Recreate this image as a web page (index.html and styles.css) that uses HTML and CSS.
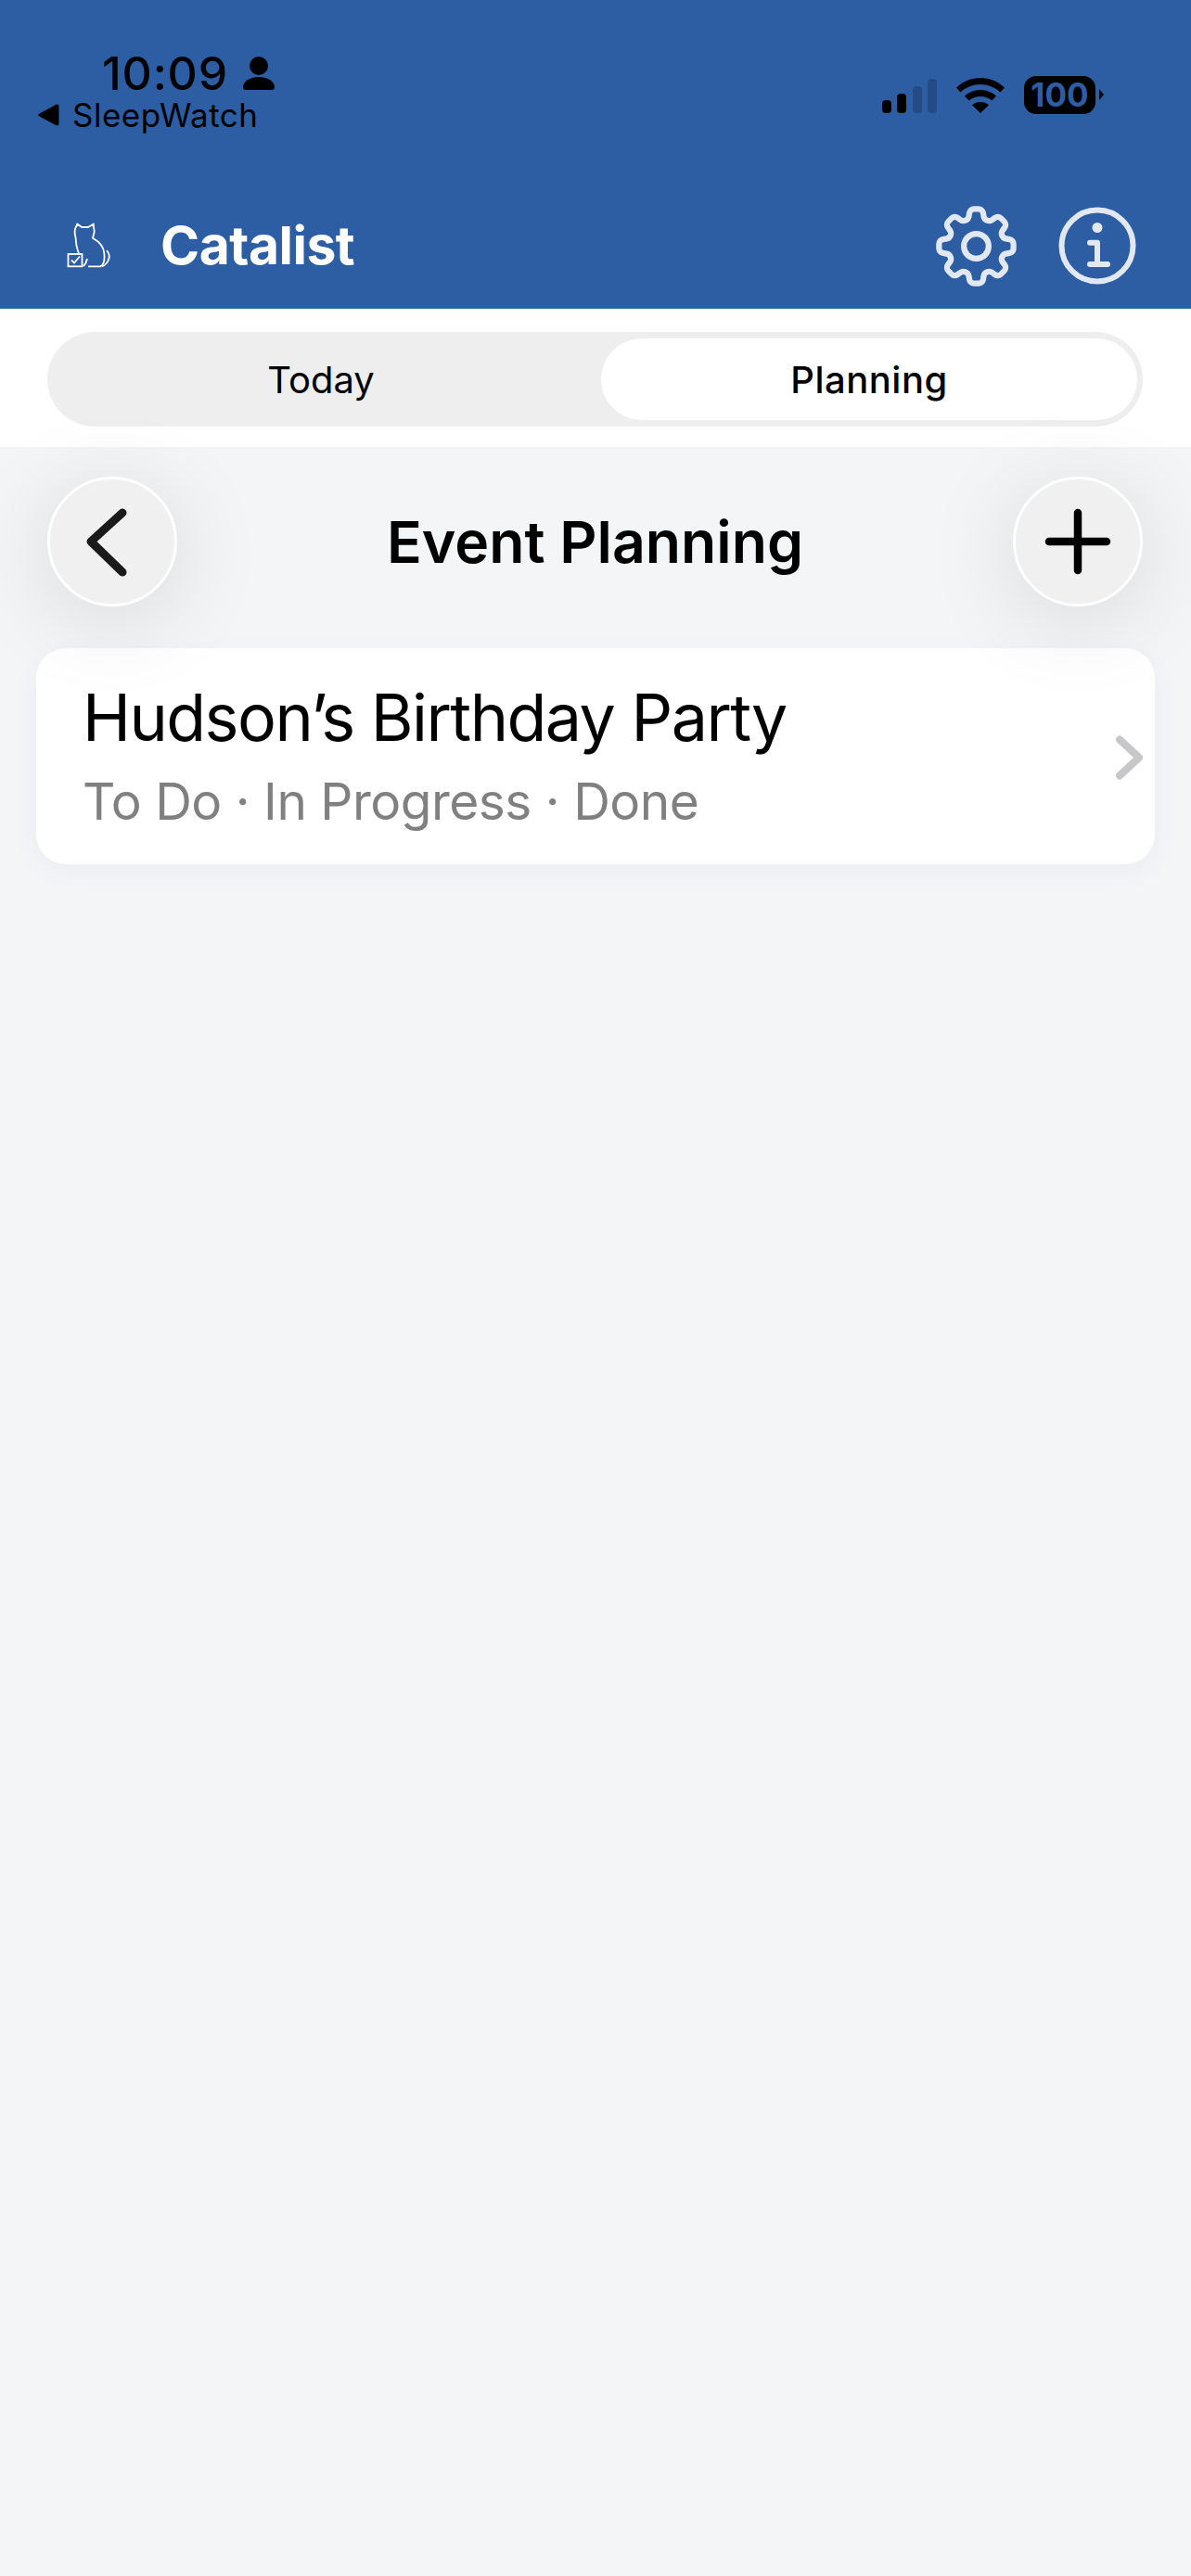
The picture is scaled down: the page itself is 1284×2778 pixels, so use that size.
FILE: index.html
```html
<!DOCTYPE html>
<html lang="en">
<head>
<meta charset="utf-8">
<title>Catalist</title>
<link rel="stylesheet" href="styles.css">
</head>
<body>
<div class="app">
  <header class="topbar">
    <div class="status">
      <div class="status-left">
        <div class="time-row">
          <span class="time">10:09</span>
          <svg class="person" viewBox="0 0 34 36"><circle cx="17" cy="10" r="10"/><path d="M3 36h28c2 0 3-1 3-3 0-6-7-11-17-11S0 27 0 33c0 2 1 3 3 3z"/></svg>
        </div>
        <div class="back-row">
          <svg class="back-tri" viewBox="0 0 23 24"><path d="M1.500 10.500 19 1c2-1 3.500 0 3.500 2v18c0 2-1.500 3-3.500 2L1.500 13.500c-2-1-2-2 0-3z"/></svg>
          <span class="back-app">SleepWatch</span>
        </div>
      </div>
      <div class="status-right">
        <div class="signal">
          <span class="bar bar1"></span>
          <span class="bar bar2"></span>
          <span class="bar bar3"></span>
          <span class="bar bar4"></span>
        </div>
        <svg class="wifi" viewBox="0 0 52 38"><path d="M26 0c10 0 19 4 26 10.500l-4.500 5C41.500 10 34 7 26 7S10.500 10 4.500 15.500L0 10.500C7 4 16 0 26 0z"/><path d="M26 13c6.500 0 12.500 2.500 17 6.500l-4.700 5C35 21.500 30.700 20 26 20s-9 1.500-12.300 4.500l-4.700-5C13.500 15.500 19.500 13 26 13z"/><path d="M26 26c3.500 0 6.700 1.200 9 3.300L26 38l-9-8.700c2.300-2.100 5.500-3.300 9-3.300z"/></svg>
        <div class="battery"><span class="battery-level">100</span></div>
        <span class="battery-cap"></span>
      </div>
    </div>
    <nav class="nav">
      <svg class="cat" viewBox="0 0 54 52" fill="none">
        <path d="M15 33.500C13 28 11.700 22 11.700 16.700 10.500 13 10.500 9 11 6.700L13.300 1.700 18.300 5H25L30.700 1.700 31.700 10 30 16.700C36 20 41.700 25 42.300 33 43 39 43 45 38.300 47.300H25"/>
        <path d="M20 47C22 45 23.500 42 24 39M45 30C47.500 33 48.500 37 47 40 45.500 44 43 46.500 39.500 47.300"/>
        <rect x="3.500" y="34" width="15" height="13.300"/>
        <path d="M7 40.500 10 43.500 16 36.500"/>
      </svg>
      <span class="brand">Catalist</span>
      <span class="nav-spacer"></span>
      <svg class="gear" viewBox="0 0 24 24" fill="none">
        <path d="M10.343 3.94c.09-.542.56-.94 1.11-.94h1.093c.55 0 1.02.398 1.11.94l.149.894c.07.424.384.764.78.93.398.164.855.142 1.205-.108l.737-.527a1.125 1.125 0 0 1 1.45.12l.773.774c.39.389.44 1.002.12 1.45l-.527.737c-.25.35-.272.806-.107 1.204.165.397.505.71.93.78l.893.15c.543.09.94.559.94 1.109v1.094c0 .55-.397 1.02-.94 1.11l-.894.149c-.424.07-.764.383-.929.78-.165.398-.143.854.107 1.204l.527.738c.32.447.269 1.06-.12 1.45l-.774.773a1.125 1.125 0 0 1-1.449.12l-.738-.527c-.35-.25-.806-.272-1.203-.107-.398.165-.71.505-.781.929l-.149.894c-.09.542-.56.94-1.11.94h-1.094c-.55 0-1.019-.398-1.11-.94l-.148-.894c-.071-.424-.384-.764-.781-.93-.398-.164-.854-.142-1.204.108l-.738.527c-.447.32-1.06.269-1.45-.12l-.773-.774a1.125 1.125 0 0 1-.12-1.45l.527-.737c.25-.35.272-.806.108-1.204-.165-.397-.506-.71-.93-.78l-.894-.15c-.542-.09-.94-.56-.94-1.109v-1.094c0-.55.398-1.02.94-1.11l.894-.149c.424-.07.765-.383.93-.78.165-.398.143-.854-.108-1.204l-.526-.738a1.125 1.125 0 0 1 .12-1.45l.773-.773a1.125 1.125 0 0 1 1.45-.12l.737.527c.35.25.807.272 1.204.107.397-.165.71-.505.78-.929l.15-.894z"/>
        <path d="M15 12a3 3 0 1 1-6 0 3 3 0 0 1 6 0z"/>
      </svg>
      <svg class="info" viewBox="0 0 90 90" fill="none">
        <circle cx="45" cy="45" r="38.500"/>
        <circle class="info-dot" cx="45" cy="25.500" r="5.500"/>
        <path d="M37 41.700H45V65M37 65H56"/>
      </svg>
    </nav>
  </header>

  <div class="tabbar">
    <div class="segments">
      <button class="segment segment-idle">Today</button>
      <button class="segment segment-active">Planning</button>
    </div>
  </div>

  <main class="content">
    <div class="page-head">
      <button class="round-btn" aria-label="Back">
        <svg class="round-icon" viewBox="0 0 84 84" fill="none"><path class="chev-back" d="M53 11 19 42 53 75"/></svg>
      </button>
      <h1 class="page-title">Event Planning</h1>
      <button class="round-btn" aria-label="Add">
        <svg class="round-icon" viewBox="0 0 84 84" fill="none"><path class="plus" d="M42 11V73M11 42H73"/></svg>
      </button>
    </div>

    <article class="card">
      <div class="card-text">
        <div class="card-title">Hudson’s Birthday Party</div>
        <div class="card-sub">To Do · In Progress · Done</div>
      </div>
      <svg class="card-chev" viewBox="0 0 38 56" fill="none"><path d="M7 8.500 28 28 7 47.500"/></svg>
    </article>
  </main>
</div>
</body>
</html>
```
FILE: styles.css
```css
* {
  box-sizing: border-box;
}

html,
body {
  margin: 0;
  padding: 0;
}

body {
  font-family: Inter, "Liberation Sans", sans-serif;
  background: #f4f5f7;
}

.app {
  width: 1284px;
  height: 2778px;
  display: flex;
  flex-direction: column;
  overflow: hidden;
}

/* Blue header */
.topbar {
  height: 333px;
  background: #2d5ea4;
  border-bottom: 1px solid #3b6db1;
  display: flex;
  flex-direction: column;
}

.status {
  height: 152px;
  padding: 52px 0 0 41px;
  display: flex;
  justify-content: space-between;
  color: #000;
}

.status-left {
  display: flex;
  flex-direction: column;
}

.time-row {
  display: flex;
  align-items: center;
  gap: 16px;
  height: 54px;
  margin-left: 69px;
}

.time {
  font-size: 50px;
  line-height: 54px;
  font-weight: 500;
  letter-spacing: 0.8px;
}

.person {
  width: 34px;
  height: 36px;
  fill: #000;
}

.back-row {
  display: flex;
  align-items: center;
  gap: 14px;
  height: 36px;
}

.back-tri {
  width: 23px;
  height: 24px;
  fill: #000;
}

.back-app {
  font-size: 35px;
  line-height: 36px;
  font-weight: 400;
  letter-spacing: 0.5px;
}

.status-right {
  display: flex;
  align-items: flex-start;
  padding: 30px 94px 0 0;
}

.signal {
  display: flex;
  align-items: flex-end;
  gap: 6.3px;
  height: 38px;
  margin-top: 2px;
}

.bar {
  width: 10px;
  border-radius: 4px;
  background: #000;
}

.bar1 { height: 14px; }
.bar2 { height: 21px; }
.bar3 { height: 29px; background: #234b85; }
.bar4 { height: 37px; background: #234b85; }

.wifi {
  width: 52px;
  height: 38px;
  fill: #000;
  margin: 2px 0 0 21px;
}

.battery {
  width: 77px;
  height: 41px;
  margin-left: 21px;
  background: #000;
  border-radius: 13px;
  display: flex;
  align-items: center;
  justify-content: center;
}

.battery-level {
  font-size: 35px;
  line-height: 41px;
  font-weight: 700;
  color: #2d5ea4;
}

.battery-cap {
  width: 0;
  height: 0;
  margin: 14px 0 0 4px;
  border-left: 5px solid #000;
  border-top: 6px solid transparent;
  border-bottom: 6px solid transparent;
}

.nav {
  flex: 1;
  display: flex;
  align-items: center;
  padding: 46px 56px 0 70px;
}

.cat {
  width: 54px;
  height: 52px;
  stroke: #fff;
  stroke-width: 1.8;
  margin-top: 2px;
}

.brand {
  margin-left: 49px;
  color: #fff;
  font-size: 57px;
  line-height: 66px;
  font-weight: 700;
  letter-spacing: -0.5px;
}

.nav-spacer {
  flex: 1;
}

.gear {
  width: 107px;
  height: 107px;
  stroke: #e2e8f2;
  stroke-width: 1.4;
  stroke-linejoin: round;
}

.info {
  width: 90px;
  height: 90px;
  margin-left: 32px;
  stroke: #e2e8f2;
  stroke-width: 6;
  stroke-linecap: round;
  stroke-linejoin: round;
}

.info-dot {
  fill: #e2e8f2;
  stroke: none;
}

/* Segmented control */
.tabbar {
  height: 149px;
  background: #fff;
  padding: 25px 52px 22px 51px;
}

.segments {
  height: 102px;
  padding: 7px 6px 7px 0;
  display: grid;
  grid-template-columns: 590px 578px;
  gap: 7px;
  background: #eeeeee;
  border-radius: 51px;
}

.segment {
  border: 0;
  padding: 0;
  background: transparent;
  color: #000;
  font-family: inherit;
  font-size: 40px;
  font-weight: 400;
  border-radius: 44px;
}

.segment-active {
  background: #fff;
  font-weight: 500;
  letter-spacing: 0.5px;
}

/* Page */
.content {
  flex: 1;
  background: #f4f5f7;
  padding: 32px 39px 0;
}

.page-head {
  position: relative;
  z-index: 1;
  height: 140px;
  margin: 0 13px 0 12px;
  display: flex;
  align-items: center;
  justify-content: space-between;
}

.round-btn {
  width: 140px;
  height: 140px;
  padding: 0;
  border: 3px solid #fff;
  border-radius: 50%;
  background: #f0f0f1;
  box-shadow: 0 14px 100px rgba(0, 0, 0, 0.12);
  display: flex;
  align-items: center;
  justify-content: center;
}

.round-icon {
  width: 84px;
  height: 84px;
}

.chev-back {
  stroke: #1a1a1a;
  stroke-width: 9;
  stroke-linecap: round;
  stroke-linejoin: round;
}

.plus {
  stroke: #000;
  stroke-width: 8.5;
  stroke-linecap: round;
}

.page-title {
  margin: 0;
  font-size: 62.500px;
  line-height: 76px;
  font-weight: 600;
  color: #000;
}

.card {
  height: 233px;
  margin-top: 45px;
  padding: 0 7px 0 50px;
  background: #fff;
  border-radius: 32px;
  box-shadow: 0 8px 28px rgba(60, 80, 120, 0.05);
  display: flex;
  align-items: center;
  justify-content: space-between;
}

.card-title {
  font-size: 70px;
  line-height: 84px;
  font-weight: 400;
  color: #000;
  letter-spacing: -1.55px;
}

.card-sub {
  margin-top: 13px;
  font-size: 55px;
  line-height: 70px;
  font-weight: 400;
  color: #808080;
  letter-spacing: -0.5px;
}

.card-chev {
  width: 38px;
  height: 56px;
  margin-top: 2px;
  stroke: #c7c7c9;
  stroke-width: 8;
  stroke-linecap: round;
  stroke-linejoin: round;
}
```
